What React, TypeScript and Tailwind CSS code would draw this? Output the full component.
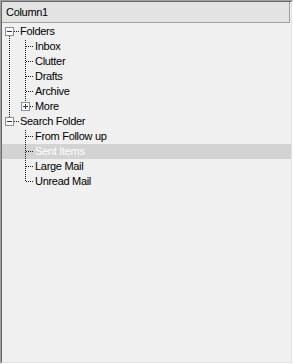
import React from "react";

const DOT = "#1a1a1a";

function VLine({ x, y1, y2, phase }: { x: number; y1: number; y2: number; phase: number }) {
  return (
    <line
      x1={x + 0.5}
      y1={y1}
      x2={x + 0.5}
      y2={y2}
      stroke={DOT}
      strokeWidth={1}
      strokeDasharray="1 1"
      strokeDashoffset={phase}
      shapeRendering="crispEdges"
    />
  );
}

function HLine({ x1, x2 }: { x1: number; x2: number }) {
  return (
    <line
      x1={x1}
      y1={7.5}
      x2={x2}
      y2={7.5}
      stroke={DOT}
      strokeWidth={1}
      strokeDasharray="1 1"
      shapeRendering="crispEdges"
    />
  );
}

function Box({ x, plus }: { x: number; plus?: boolean }) {
  return (
    <g shapeRendering="crispEdges">
      <rect x={x + 0.5} y={3.5} width={8} height={8} fill="#ffffff" stroke="#8e8f8f" />
      <line x1={x + 2} y1={7.5} x2={x + 7} y2={7.5} stroke="#1f3a73" strokeWidth={1} />
      {plus && <line x1={x + 4.5} y1={5} x2={x + 4.5} y2={10} stroke="#1f3a73" strokeWidth={1} />}
    </g>
  );
}

type Kind = "rootFirst" | "rootLast" | "child" | "childLastPlus" | "child2" | "child2Last";

function Gutter({ kind, phase }: { kind: Kind; phase: number }) {
  const isRoot = kind === "rootFirst" || kind === "rootLast";
  const w = isRoot ? 18 : 33;
  return (
    <svg width={w} height={15} viewBox={`0 0 ${w} 15`} className="shrink-0 block">
      {kind === "rootFirst" && (
        <>
          <VLine x={7} y1={12} y2={15} phase={phase} />
          <Box x={3} />
          <HLine x1={12} x2={17} />
        </>
      )}
      {kind === "rootLast" && (
        <>
          <VLine x={7} y1={0} y2={3} phase={phase} />
          <Box x={3} />
          <HLine x1={12} x2={17} />
        </>
      )}
      {kind === "child" && (
        <>
          <VLine x={7} y1={0} y2={15} phase={phase} />
          <VLine x={23} y1={0} y2={15} phase={phase} />
          <HLine x1={24} x2={32} />
        </>
      )}
      {kind === "childLastPlus" && (
        <>
          <VLine x={7} y1={0} y2={15} phase={phase} />
          <VLine x={23} y1={0} y2={3} phase={phase} />
          <Box x={19} plus />
          <HLine x1={28} x2={32} />
        </>
      )}
      {kind === "child2" && (
        <>
          <VLine x={23} y1={0} y2={15} phase={phase} />
          <HLine x1={24} x2={32} />
        </>
      )}
      {kind === "child2Last" && (
        <>
          <VLine x={23} y1={0} y2={8} phase={phase} />
          <HLine x1={24} x2={32} />
        </>
      )}
    </svg>
  );
}

const rows: { label: string; kind: Kind; selected?: boolean }[] = [
  { label: "Folders", kind: "rootFirst" },
  { label: "Inbox", kind: "child" },
  { label: "Clutter", kind: "child" },
  { label: "Drafts", kind: "child" },
  { label: "Archive", kind: "child" },
  { label: "More", kind: "childLastPlus" },
  { label: "Search Folder", kind: "rootLast" },
  { label: "From Follow up", kind: "child2" },
  { label: "Sent Items", kind: "child2", selected: true },
  { label: "Large Mail", kind: "child2" },
  { label: "Unread Mail", kind: "child2Last" },
];

export default function App() {
  return (
    <div
      className="w-[293px] h-[364px] bg-[#f0f0f0] text-[11px] tracking-[-0.3px] text-black"
      style={{ fontFamily: '"Liberation Sans", Arial, sans-serif' }}
    >
      <div className="w-full h-full border-t border-l border-t-[#a0a0a0] border-l-[#a0a0a0] border-b border-r border-b-[#ffffff] border-r-[#ffffff]">
        <div className="w-full h-full flex flex-col border-t border-l border-t-[#696969] border-l-[#696969] border-b border-r border-b-[#e3e3e3] border-r-[#e3e3e3] bg-[#f0f0f0]">
          <div className="h-[21px] w-[288px] shrink-0 flex items-center pl-[4px] bg-[#e3e3e3] border-b border-r border-[#a0a0a0] leading-none">
            Column1
          </div>
          <div className="pt-[1px] flex flex-col">
            {rows.map((r, i) => (
              <div
                key={r.label}
                className={
                  "h-[15px] flex items-center " + (r.selected ? "bg-[#d3d3d3] text-white" : "")
                }
              >
                <Gutter kind={r.kind} phase={i % 2} />
                <span className="leading-none whitespace-nowrap">{r.label}</span>
              </div>
            ))}
          </div>
        </div>
      </div>
    </div>
  );
}
